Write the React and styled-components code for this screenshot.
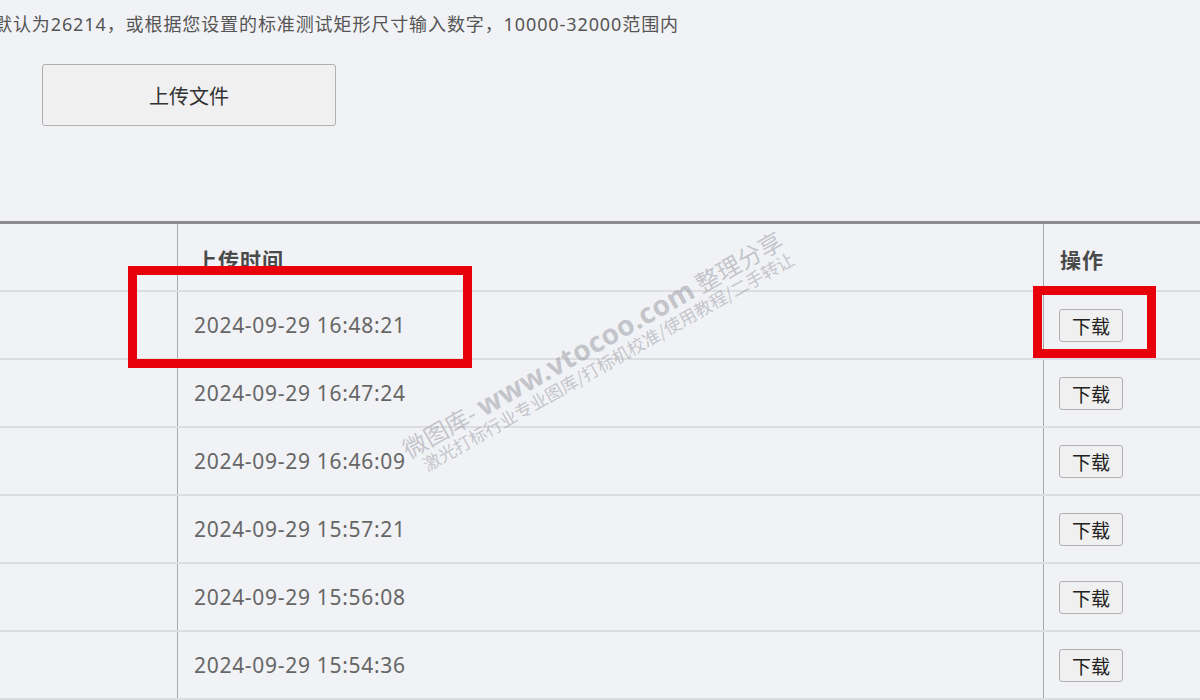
import React from "react";
import styled, { createGlobalStyle } from "styled-components";

const Global = createGlobalStyle`
  html, body { margin: 0; padding: 0; }
  body {
    background: #f1f2f5;
    font-family: "Noto Sans", "Noto Sans CJK SC", sans-serif;
    width: 1200px;
    height: 700px;
    overflow: hidden;
  }
`;

const Page = styled.div`
  position: relative;
  width: 1200px;
  height: 700px;
  overflow: hidden;
  background: #f1f2f5;
`;

const Hint = styled.div`
  height: 48px;
  display: flex;
  align-items: center;
  margin-left: -6px;
  margin-top: -1px;
  font-size: 18px;
  color: #555;
  white-space: nowrap;
  letter-spacing: 0.9px;
`;

const UploadRow = styled.div`
  padding: 17px 0 0 42px;
  height: 174px;
  box-sizing: border-box;
`;

const GrayButton = styled.button`
  font-family: "Noto Sans CJK SC", sans-serif;
  background: #f0f0f0;
  border: 1.5px solid #b0b0b0;
  border-radius: 3px;
  color: #333;
  padding: 0;
  cursor: pointer;
`;

const UploadButton = styled(GrayButton)`
  width: 294px;
  height: 62px;
  font-size: 20px;
`;

const Table = styled.div`
  border-top: 3px solid #8c8c8c;
`;

const Row = styled.div`
  display: grid;
  grid-template-columns: 178px 866px 156px;
  height: 68px;
  border-bottom: 2px solid #dcdde1;
  box-sizing: border-box;
`;

const Cell = styled.div`
  display: flex;
  align-items: center;
  padding-left: ${(p) => p.$pad || 0}px;
  border-right: ${(p) => (p.$line ? "1.5px solid #a9a9ad" : "none")};
  color: ${(p) => (p.$head ? "#4a4a4a" : "#666")};
  font-size: 21px;
  letter-spacing: ${(p) => (p.$head ? 1 : 0.7)}px;
  font-weight: ${(p) => (p.$head ? 700 : 400)};
  padding-top: ${(p) => (p.$head ? 3 : 0)}px;
  box-sizing: border-box;
`;

const DownloadButton = styled(GrayButton)`
  width: 64px;
  height: 33px;
  font-size: 19px;
  color: #222;
`;

const Mark = styled.div`
  position: absolute;
  border: 9px solid #e8000b;
  box-sizing: border-box;
  pointer-events: none;
`;

const Watermark = styled.div`
  position: absolute;
  left: 380px;
  top: 326px;
  width: 440px;
  transform: rotate(-29.5deg);
  transform-origin: center;
  color: rgba(140, 140, 150, 0.45);
  font-family: "Noto Sans CJK SC", sans-serif;
  pointer-events: none;
  white-space: nowrap;
  line-height: 1.05;
`;

const WmBig = styled.div`
  font-size: 24px;
  font-weight: 400;
  span { font-family: "Noto Sans", sans-serif; font-weight: 700; font-size: 28px; letter-spacing: 0.3px; }
`;

const WmSmall = styled.div`
  font-size: 17.5px;
  padding-left: 10px;
`;

const rows = [
  "2024-09-29 16:48:21",
  "2024-09-29 16:47:24",
  "2024-09-29 16:46:09",
  "2024-09-29 15:57:21",
  "2024-09-29 15:56:08",
  "2024-09-29 15:54:36",
];

export default function App() {
  return (
    <Page>
      <Global />
      <Hint>默认为26214，或根据您设置的标准测试矩形尺寸输入数字，10000-32000范围内</Hint>
      <UploadRow>
        <UploadButton>上传文件</UploadButton>
      </UploadRow>
      <Table>
        <Row>
          <Cell $line />
          <Cell $line $head $pad={18}>上传时间</Cell>
          <Cell $head $pad={16}>操作</Cell>
        </Row>
        {rows.map((t) => (
          <Row key={t}>
            <Cell $line />
            <Cell $line $pad={16}>{t}</Cell>
            <Cell $pad={15}>
              <DownloadButton>下载</DownloadButton>
            </Cell>
          </Row>
        ))}
      </Table>
      <Mark style={{ left: 128, top: 266, width: 344, height: 102 }} />
      <Mark style={{ left: 1033, top: 286, width: 123, height: 72 }} />
      <Watermark>
        <WmBig>微图库- <span>www.vtocoo.com</span> 整理分享</WmBig>
        <WmSmall>激光打标行业专业图库/打标机校准/使用教程/二手转让</WmSmall>
      </Watermark>
    </Page>
  );
}
